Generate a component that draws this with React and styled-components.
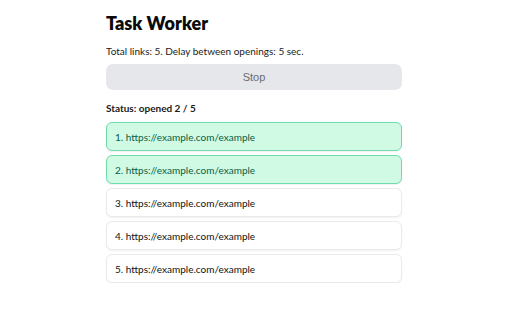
import React from "react";
import styled, { createGlobalStyle } from "styled-components";

const Global = createGlobalStyle`
  html, body { margin: 0; padding: 0; background: #ffffff; }
  body { font-family: Lato, "Noto Sans", sans-serif; color: #111111; }
`;

const Page = styled.div`
  width: 296px;
  padding: 12px 0 0 106px;
  display: flex;
  flex-direction: column;
`;

const Title = styled.h1`
  margin: 0;
  font-size: 18px;
  line-height: 22px;
  font-weight: 800;
  color: #0a0a0a;
`;

const Info = styled.p`
  margin: 10px 0 0;
  font-size: 10px;
  line-height: 14px;
  color: #1a1a1a;
`;

const StopButton = styled.button`
  margin-top: 6px;
  height: 26px;
  width: 100%;
  border: none;
  border-radius: 7px;
  background: #e5e7eb;
  color: #6b6b6b;
  font-family: "Liberation Sans", Arial, sans-serif;
  font-size: 11px;
  cursor: pointer;
`;

const Status = styled.p`
  margin: 11px 0 0;
  font-size: 10px;
  line-height: 14px;
  font-weight: 700;
  color: #1a1a1a;
`;

const List = styled.ul`
  list-style: none;
  margin: 7px 0 0;
  padding: 0;
  display: flex;
  flex-direction: column;
  gap: 4px;
`;

const Item = styled.li`
  box-sizing: border-box;
  height: 29px;
  display: flex;
  align-items: center;
  padding: 0 8px;
  border-radius: 6px;
  font-size: 10px;
  font-weight: 400;
  border: 1px solid ${(p) => (p.$opened ? "#6fdcae" : "#e9eaec")};
  background: ${(p) => (p.$opened ? "#d1fae5" : "#ffffff")};
  color: ${(p) => (p.$opened ? "#065f46" : "#111111")};
  box-shadow: 0 1px 2px rgba(0, 0, 0, 0.06);
`;

const links = [1, 2, 3, 4, 5].map((n) => ({
  n,
  url: "https://example.com/example",
  opened: n <= 2,
}));

export default function App() {
  return (
    <>
      <Global />
      <Page>
        <Title>Task Worker</Title>
        <Info>Total links: 5. Delay between openings: 5 sec.</Info>
        <StopButton>Stop</StopButton>
        <Status>Status: opened 2 / 5</Status>
        <List>
          {links.map((l) => (
            <Item key={l.n} $opened={l.opened}>
              {l.n}. {l.url}
            </Item>
          ))}
        </List>
      </Page>
    </>
  );
}
